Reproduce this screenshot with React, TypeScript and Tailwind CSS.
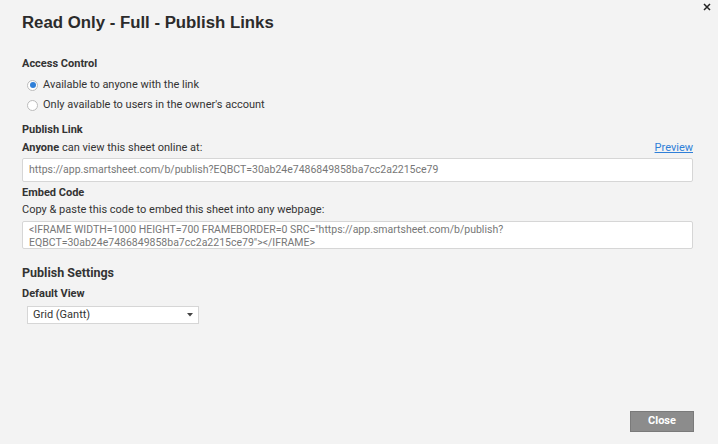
const Radio = ({ checked, label }: { checked?: boolean; label: string }) => (
  <label className="flex items-center gap-[5px] h-[20px] text-[11px] text-[#333]">
    <span
      className={
        checked
          ? 'w-[11px] h-[11px] rounded-full bg-white border border-[#bbb] flex items-center justify-center'
          : 'w-[11px] h-[11px] rounded-full bg-white border border-[#bbb]'
      }
    >
      {checked && <span className="w-[6px] h-[6px] rounded-full bg-[#2f7fd8]" />}
    </span>
    {label}
  </label>
);

const App = () => {
  return (
    <div className="w-[718px] h-[444px] bg-[#f3f3f3] relative flex flex-col font-['Roboto',sans-serif] text-[#333]">
      <button className="absolute top-[2px] right-[6px] text-[#222]">
        <svg width="10" height="10" viewBox="0 0 10 10">
          <path d="M2 2 L8 8 M8 2 L2 8" stroke="currentColor" strokeWidth="1.5" />
        </svg>
      </button>

      <div className="pl-[22px] pr-[25px] pt-[12px] flex-grow flex flex-col">
        <p className="text-[16.8px] font-bold font-['Liberation_Sans',sans-serif] text-[#2b2b2b] leading-[22px]">
          Read Only - Full - Publish Links
        </p>

        <p className="mt-[23px] text-[11px] font-bold leading-[14px]">Access Control</p>
        <div className="ml-[5px] mt-[4px] flex flex-col">
          <Radio checked label="Available to anyone with the link" />
          <Radio label="Only available to users in the owner's account" />
        </div>

        <p className="mt-[8px] text-[11px] font-bold leading-[14px]">Publish Link</p>
        <div className="mt-[4px] flex justify-between items-center text-[11px] leading-[14px]">
          <p>
            <span className="font-bold">Anyone</span> can view this sheet online at:
          </p>
          <a href="#" className="text-[#2f7fd8] underline">Preview</a>
        </div>
        <div className="mt-[3px] h-[24px] bg-white border border-[#d6d6d6] rounded-[2px] px-[6px] flex items-center text-[10.5px] text-[#777]">
          https://app.smartsheet.com/b/publish?EQBCT=30ab24e7486849858ba7cc2a2215ce79
        </div>

        <p className="mt-[4px] text-[11px] font-bold leading-[14px]">Embed Code</p>
        <p className="mt-[3px] text-[11px] leading-[14px]">Copy &amp; paste this code to embed this sheet into any webpage:</p>
        <div className="mt-[4px] h-[28px] bg-white border border-[#d6d6d6] rounded-[2px] px-[6px] pt-[2px] text-[10.5px] leading-[12.5px] text-[#777]">
          &lt;IFRAME WIDTH=1000 HEIGHT=700 FRAMEBORDER=0 SRC="https://app.smartsheet.com/b/publish?
          <br />
          EQBCT=30ab24e7486849858ba7cc2a2215ce79"&gt;&lt;/IFRAME&gt;
        </div>

        <p className="mt-[16px] text-[12.5px] font-bold leading-[16px]">Publish Settings</p>
        <p className="mt-[6px] text-[11px] font-bold leading-[14px]">Default View</p>
        <div className="mt-[5px] ml-[5px] w-[172px] h-[18px] bg-white border border-[#d6d6d6] flex items-center justify-between px-[5px] text-[11px]">
          <span>Grid (Gantt)</span>
          <svg width="6" height="4" viewBox="0 0 6 4">
            <path d="M0 0 L6 0 L3 3.5 Z" fill="#444" />
          </svg>
        </div>
      </div>

      <div className="flex justify-end pr-[24px] pb-[12px]">
        <button className="w-[64px] h-[21px] bg-[#8c8c8c] border border-[#7a7a7a] text-white text-[11px] font-bold">
          Close
        </button>
      </div>
    </div>
  );
};

export default App;
